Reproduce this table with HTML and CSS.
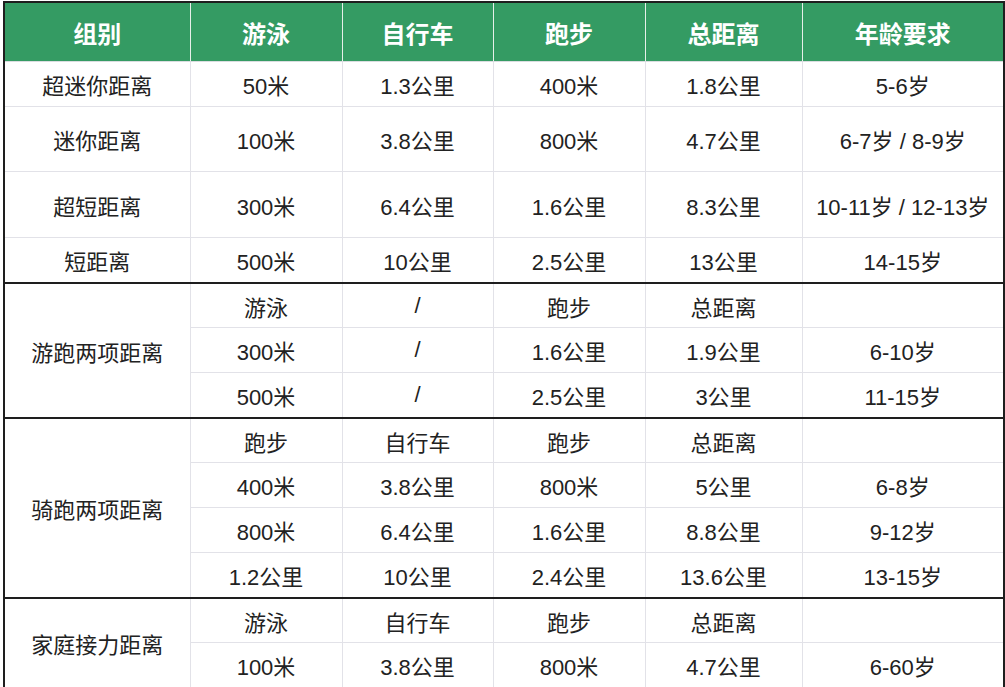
FILE: index.html
```html
<!DOCTYPE html>
<html lang="zh">
<head>
<meta charset="utf-8">
<link rel="stylesheet" href="styles.css">
</head>
<body>
<div class="sheet">
<table class="grid">
<colgroup>
<col class="c1"><col class="c2"><col class="c3"><col class="c4"><col class="c5"><col class="c6">
</colgroup>
<thead>
<tr class="head"><th>组别</th><th>游泳</th><th>自行车</th><th>跑步</th><th>总距离</th><th>年龄要求</th></tr>
</thead>
<tbody>
<tr class="r45"><td>超迷你距离</td><td>50米</td><td>1.3公里</td><td>400米</td><td>1.8公里</td><td>5-6岁</td></tr>
<tr class="r65"><td>迷你距离</td><td>100米</td><td>3.8公里</td><td>800米</td><td>4.7公里</td><td>6-7岁 / 8-9岁</td></tr>
<tr class="r66"><td>超短距离</td><td>300米</td><td>6.4公里</td><td>1.6公里</td><td>8.3公里</td><td>10-11岁 / 12-13岁</td></tr>
<tr class="r45"><td>短距离</td><td>500米</td><td>10公里</td><td>2.5公里</td><td>13公里</td><td>14-15岁</td></tr>

<tr class="r45 group"><td rowspan="3">游跑两项距离</td><td>游泳</td><td>/</td><td>跑步</td><td>总距离</td><td></td></tr>
<tr class="r45"><td>300米</td><td>/</td><td>1.6公里</td><td>1.9公里</td><td>6-10岁</td></tr>
<tr class="r45"><td>500米</td><td>/</td><td>2.5公里</td><td>3公里</td><td>11-15岁</td></tr>

<tr class="r45 group"><td rowspan="4">骑跑两项距离</td><td>跑步</td><td>自行车</td><td>跑步</td><td>总距离</td><td></td></tr>
<tr class="r45"><td>400米</td><td>3.8公里</td><td>800米</td><td>5公里</td><td>6-8岁</td></tr>
<tr class="r45"><td>800米</td><td>6.4公里</td><td>1.6公里</td><td>8.8公里</td><td>9-12岁</td></tr>
<tr class="r45"><td>1.2公里</td><td>10公里</td><td>2.4公里</td><td>13.6公里</td><td>13-15岁</td></tr>

<tr class="r45 group"><td rowspan="2">家庭接力距离</td><td>游泳</td><td>自行车</td><td>跑步</td><td>总距离</td><td></td></tr>
<tr class="r45"><td>100米</td><td>3.8公里</td><td>800米</td><td>4.7公里</td><td>6-60岁</td></tr>
</tbody>
</table>
</div>
</body>
</html>
```
FILE: styles.css
```css
html, body {
  margin: 0;
  padding: 0;
  background: #ffffff;
}
body {
  font-family: "Liberation Sans", "Noto Sans CJK SC", sans-serif;
  color: #222222;
  overflow: hidden;
}
.sheet {
  padding: 1px 0 0 3px;
  width: 1005px;
  height: 687px;
  box-sizing: border-box;
}
.grid {
  border-collapse: collapse;
  table-layout: fixed;
  width: 1000px;
  border-left: 2px solid #1e1e1e;
  border-right: 2px solid #1e1e1e;
  border-top: 2px solid #1e1e1e;
}
.c1 { width: 186px; }
.c2 { width: 152px; }
.c3 { width: 151px; }
.c4 { width: 152px; }
.c5 { width: 157px; }
.c6 { width: 202px; }
.grid th, .grid td {
  padding: 0;
  text-align: center;
  vertical-align: middle;
  border: 1px solid #e2e2e8;
  white-space: nowrap;
}
.grid td {
  font-size: 22px;
  font-weight: normal;
}
.head th {
  height: 58px;
  background: #349b63;
  color: #ffffff;
  font-size: 24px;
  font-weight: bold;
  border-color: #e6efe9;
  border-top: none;
  border-bottom: 1px solid #dadde0;
}
.r45 td { height: 44px; }
.r65 td { height: 64px; }
.r66 td { height: 65px; }
.group td { border-top: 2px solid #1e1e1e; height: 43px; }
.grid td[rowspan] { height: auto; }
```
